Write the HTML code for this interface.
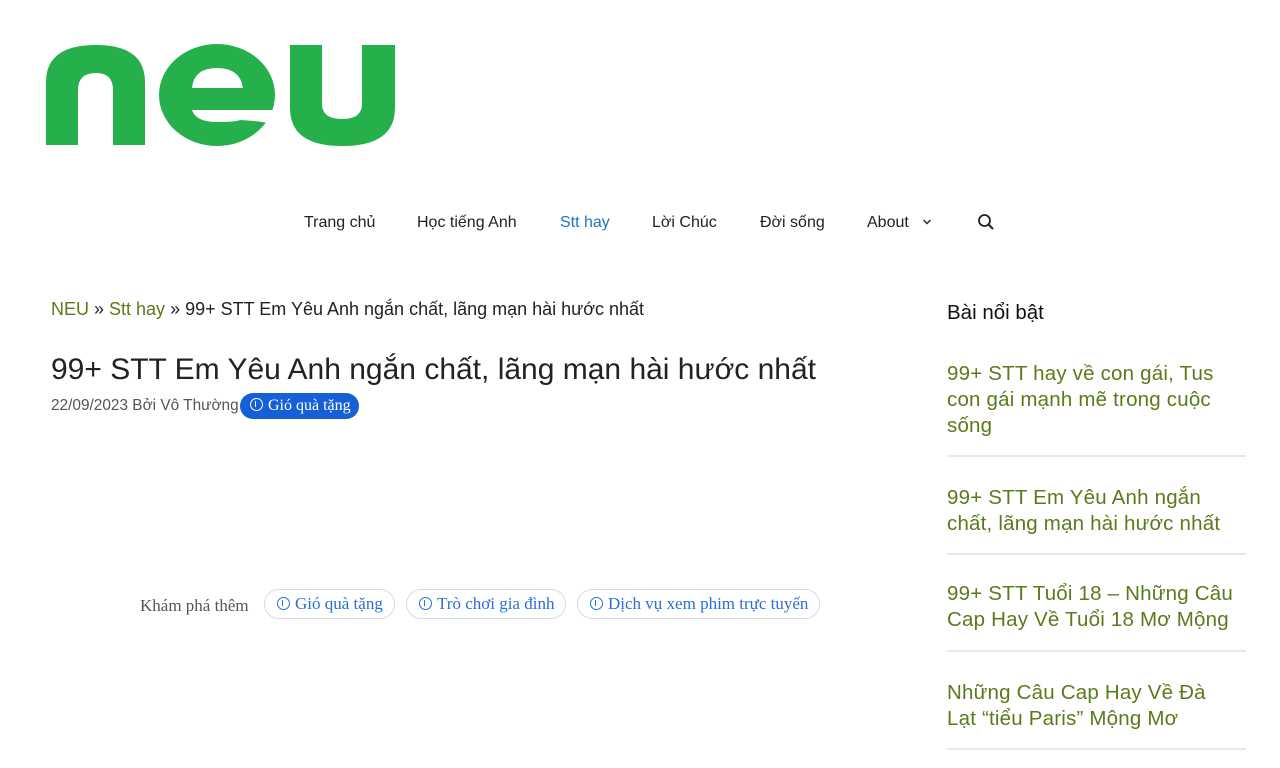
<!DOCTYPE html>
<html><head><meta charset="utf-8"><style>
*{margin:0;padding:0;box-sizing:border-box}
body{width:1280px;height:768px;background:#fff;font-family:"Liberation Sans",sans-serif;color:#222;position:relative;overflow:hidden}
.a{position:absolute;white-space:nowrap}
.nav{font-size:16px;top:214px;color:#222}
.g{color:#5b7a1c}
.side{position:absolute;left:947px;width:295px;font-size:20.5px;line-height:26px;color:#5b7a1c;letter-spacing:0.2px}
.hr{position:absolute;left:947px;width:299px;height:2px;background:#e8e8e8}
.pill{position:absolute;top:589px;height:30px;border:1px solid #d6dbe3;border-radius:15px;font-family:"Liberation Serif",serif;font-size:17px;color:#2a6fd6;line-height:28px;padding:0 11px 0 12px;white-space:nowrap}
.ic{display:inline-block;width:13px;height:13px;border:1.6px solid currentColor;border-radius:50%;vertical-align:-1px;margin-right:5px;position:relative}
.ic:after{content:"";position:absolute;left:3.5px;top:1.5px;width:3px;height:6px;border-left:1.5px solid currentColor}
</style></head><body>
<svg class="a" style="left:0;top:0" width="420" height="170">
<g fill="#25b04b">
<path d="M46,145 V82 Q46,45 96,45 Q145,45 145,82 V145 H113 V90 Q113,73 96,73 Q78,73 78,90 V145 Z"/>
<ellipse cx="217" cy="95" rx="58" ry="51"/>
<path d="M290,45 V108 Q290,146 342,146 Q395,146 395,108 V45 H362 V104 Q362,119 342,119 Q322,119 322,104 V45 Z"/>
</g>
<g fill="#fff">
<path d="M192,88 Q194,68 217,68 Q240,68 243,88 Z"/>
<path d="M192,110 H276 V125 Q262,121 240,120 Q236,122 217,122 Q196,122 192,110 Z"/>
</g>
</svg>
<div class="a nav" style="left:304px">Trang chủ</div>
<div class="a nav" style="left:417px">Học tiếng Anh</div>
<div class="a nav" style="left:560px;color:#1e73be">Stt hay</div>
<div class="a nav" style="left:652px">Lời Chúc</div>
<div class="a nav" style="left:760px">Đời sống</div>
<div class="a nav" style="left:867px">About</div>
<svg class="a" style="left:922px;top:218px" width="10" height="8"><path d="M1.5,2 L5,5.5 L8.5,2" fill="none" stroke="#222" stroke-width="1.4"/></svg>
<svg class="a" style="left:977px;top:213px" width="18" height="18"><circle cx="7.5" cy="7.5" r="5.5" fill="none" stroke="#222" stroke-width="1.8"/><path d="M11.5,11.5 L16,16" stroke="#222" stroke-width="2"/></svg>
<div class="a" style="left:51px;top:299px;font-size:18px"><span class="g">NEU</span> » <span class="g">Stt hay</span> » 99+ STT Em Yêu Anh ngắn chất, lãng mạn hài hước nhất</div>
<div class="a" style="left:51px;top:353px;font-size:30px;color:#222">99+ STT Em Yêu Anh ngắn chất, lãng mạn hài hước nhất</div>
<div class="a" style="left:51px;top:397px;font-size:15.4px;color:#555">22/09/2023 Bởi Vô Thường</div>
<div class="a" style="left:240px;top:393px;height:26px;width:119px;background:#1560d6;border-radius:13px;color:#fff;font-family:'Liberation Serif',serif;font-size:16px;line-height:26px;padding-left:10px"><span class="ic" style="border-color:#fff;color:#fff"></span>Gió quà tặng</div>
<div class="a" style="left:140px;top:596px;font-family:'Liberation Serif',serif;font-size:17px;color:#555">Khám phá thêm</div>
<div class="pill" style="left:264px"><span class="ic"></span>Gió quà tặng</div>
<div class="pill" style="left:406px"><span class="ic"></span>Trò chơi gia đình</div>
<div class="pill" style="left:577px"><span class="ic"></span>Dịch vụ xem phim trực tuyến</div>
<div class="a" style="left:947px;top:301px;font-size:20.5px;color:#111">Bài nổi bật</div>
<div class="side" style="top:361px">99+ STT hay về con gái, Tus con gái mạnh mẽ trong cuộc sống</div>
<div class="hr" style="top:455px"></div>
<div class="side" style="top:485px">99+ STT Em Yêu Anh ngắn chất, lãng mạn hài hước nhất</div>
<div class="hr" style="top:553px"></div>
<div class="side" style="top:581px">99+ STT Tuổi 18 – Những Câu Cap Hay Về Tuổi 18 Mơ Mộng</div>
<div class="hr" style="top:650px"></div>
<div class="side" style="top:680px;width:285px">Những Câu Cap Hay Về Đà Lạt “tiểu Paris” Mộng Mơ</div>
<div class="hr" style="top:748px"></div>
</body></html>
